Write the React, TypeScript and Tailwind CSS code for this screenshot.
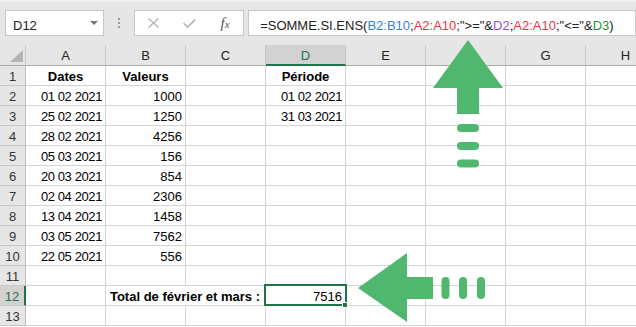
import React from 'react'

const COLS = ['A', 'B', 'C', 'D', 'E', 'F', 'G', 'H']

type Cell = { v: string; bold?: boolean; align?: 'center' | 'right'; date?: boolean }

const dates = ['01 02 2021', '25 02 2021', '28 02 2021', '05 03 2021', '20 03 2021', '02 04 2021', '13 04 2021', '03 05 2021', '22 05 2021']
const values = ['1000', '1250', '4256', '156', '854', '2306', '1458', '7562', '556']
const periode = ['01 02 2021', '31 03 2021']

function buildRows(): Cell[][] {
  const rows: Cell[][] = []
  rows.push([
    { v: 'Dates', bold: true, align: 'center' },
    { v: 'Valeurs', bold: true, align: 'center' },
    { v: '' },
    { v: 'Période', bold: true, align: 'center' },
  ])
  dates.forEach((d, i) => {
    rows.push([
      { v: d, align: 'right', date: true },
      { v: values[i], align: 'right' },
      { v: '' },
      { v: periode[i] ?? '', align: 'right', date: true },
    ])
  })
  rows.push([])
  rows.push([])
  rows.push([])
  return rows
}

function Toolbar() {
  return (
    <div className="h-[45px] bg-[#e6e6e6] border-t-2 border-[#efefef] pt-[8px] pl-[5px] flex items-start">
      <div className="w-[102px] h-[26px] bg-white border border-[#c6c6c6] flex items-start pl-[7px] pt-[8px] text-[13px] leading-[13px] text-[#222]">
        <span>D12</span>
        <svg width="8" height="4" viewBox="0 0 8 4" className="ml-auto mr-[5px] mt-[2px]">
          <polygon points="0,0 8,0 4,4" fill="#777" />
        </svg>
      </div>
      <div className="w-[31px] flex flex-col items-center pt-[8px] gap-[2px]">
        <div className="w-[2px] h-[2px] bg-[#9c9c9c]" />
        <div className="w-[2px] h-[2px] bg-[#9c9c9c]" />
        <div className="w-[2px] h-[2px] bg-[#9c9c9c]" />
      </div>
      <div className="w-[110px] h-[26px] bg-white border border-[#c6c6c6] flex">
        <div className="w-[36px] flex items-center justify-center">
          <svg width="11" height="10" viewBox="0 0 11 10">
            <path d="M0.5 0.5 L10.5 9.5 M10.5 0.5 L0.5 9.5" stroke="#b3b3b3" strokeWidth="1.3" fill="none" />
          </svg>
        </div>
        <div className="w-[36px] flex items-center justify-center pt-[1px]">
          <svg width="13" height="9" viewBox="0 0 13 9">
            <path d="M0.6 4.2 L4.5 8 L12.4 0.6" stroke="#b3b3b3" strokeWidth="1.6" fill="none" />
          </svg>
        </div>
        <div className="w-[36px] flex items-center justify-center">
          <span className="font-['Liberation_Serif',serif] italic text-[15px] leading-none text-[#555]">
            f<span className="text-[11px]">x</span>
          </span>
        </div>
      </div>
      <div className="ml-[4px] w-[400px] h-[26px] bg-white border border-[#c6c6c6] pl-[11px] pt-[8px] text-[13px] leading-[13px] whitespace-nowrap text-[#222]">
        =SOMME.SI.ENS(<span className="text-[#3b7fd4]">B2:B10</span>;<span className="text-[#e03a3e]">A2:A10</span>;"&gt;="&amp;<span className="text-[#9b4fd0]">D2</span>;<span className="text-[#e03a3e]">A2:A10</span>;"&lt;="&amp;<span className="text-[#2a8f3c]">D3</span>)
      </div>
    </div>
  )
}

function CellView({ cell }: { cell?: Cell }) {
  const align = cell?.align === 'center' ? 'justify-center' : cell?.align === 'right' ? 'justify-end' : 'justify-start'
  return (
    <div className={`h-[20px] border-r border-b border-[#d4d4d4] flex items-end px-[3px] pb-[2px] text-[13px] leading-[13px] whitespace-nowrap ${align}`}>
      {cell?.v ? (
        <span className={`${cell.bold ? 'font-bold' : ''} ${cell.date ? 'tracking-[-0.4px]' : ''}`}>{cell.v}</span>
      ) : null}
    </div>
  )
}

function Sheet() {
  const rows = buildRows()
  return (
    <div className="grid grid-cols-[26px_repeat(8,80px)]">
      <div className="h-[21px] bg-[#e6e6e6] border-r border-b border-r-[#c6c6c6] border-b-[#ababab] flex items-end justify-end pr-[2px] pb-[3px]">
        <svg width="13" height="12" viewBox="0 0 13 12">
          <polygon points="13,0 13,12 0,12" fill="#b4b4b4" />
        </svg>
      </div>
      {COLS.map((c) =>
        c === 'D' ? (
          <div key={c} className="h-[21px] bg-[#d2d2d2] border-r border-r-[#c6c6c6] border-b-2 border-b-[#217346] flex items-end justify-center pb-[2px] text-[13px] leading-[13px] text-[#217346]">
            {c}
          </div>
        ) : (
          <div key={c} className="h-[21px] bg-[#e6e6e6] border-r border-b border-r-[#c6c6c6] border-b-[#ababab] flex items-end justify-center pb-[3px] text-[13px] leading-[13px] text-[#222]">
            {c}
          </div>
        )
      )}

      {rows.map((row, i) => {
        const n = i + 1
        const header =
          n === 12 ? (
            <div key={`h${n}`} className="h-[20px] bg-[#d2d2d2] border-r-2 border-r-[#217346] border-b border-b-[#c8c8c8] flex items-end justify-center pb-[2px] text-[13px] leading-[13px] text-[#217346]">
              {n}
            </div>
          ) : (
            <div key={`h${n}`} className="h-[20px] bg-[#e6e6e6] border-r border-b border-r-[#bdbdbd] border-b-[#c8c8c8] flex items-end justify-center pb-[2px] text-[13px] leading-[13px] text-[#333]">
              {n}
            </div>
          )

        if (n === 12) {
          return (
            <React.Fragment key={n}>
              {header}
              <CellView />
              <div className="col-span-2 h-[20px] border-r border-b border-[#d4d4d4] flex items-end justify-end px-[5px] pb-[2px] text-[13px] leading-[13px] whitespace-nowrap font-bold">
                Total de février et mars :
              </div>
              <div className="relative h-[20px] border-r border-b border-[#d4d4d4] flex items-end justify-end px-[3px] pb-[2px] text-[13px] leading-[13px]">
                <span>7516</span>
                <div className="absolute -left-[2px] -top-[2px] -right-[2px] -bottom-[1px] border-2 border-[#217346]">
                  <div className="absolute -right-[3px] -bottom-[4px] w-[6px] h-[6px] bg-[#217346] border border-white" />
                </div>
              </div>
              {COLS.slice(4).map((c) => (
                <CellView key={c} />
              ))}
            </React.Fragment>
          )
        }

        return (
          <React.Fragment key={n}>
            {header}
            {COLS.map((c, j) => (
              <CellView key={c} cell={row[j]} />
            ))}
          </React.Fragment>
        )
      })}
    </div>
  )
}

function Arrows() {
  const green = '#50b86e'
  return (
    <svg className="absolute inset-0 pointer-events-none" width="636" height="327" viewBox="0 0 636 327">
      <polygon points="468,40 503,88 479,88 479,114 457,114 457,88 433,88" fill={green} />
      <rect x="457" y="124" width="22" height="8" rx="4" fill={green} />
      <rect x="457" y="142" width="22" height="8" rx="4" fill={green} />
      <rect x="457" y="159.5" width="22" height="8" rx="4" fill={green} />

      <polygon points="358,288 407,253 407,277 433,277 433,299 407,299 407,322" fill={green} />
      <rect x="441.5" y="277" width="8" height="22" rx="4" fill={green} />
      <rect x="459" y="277" width="8" height="22" rx="4" fill={green} />
      <rect x="477" y="277" width="8" height="22" rx="4" fill={green} />
    </svg>
  )
}

export default function App() {
  return (
    <div className="relative w-[636px] h-[327px] overflow-hidden bg-white font-['Liberation_Sans',Arial,sans-serif] text-black">
      <Toolbar />
      <Sheet />
      <Arrows />
    </div>
  )
}
